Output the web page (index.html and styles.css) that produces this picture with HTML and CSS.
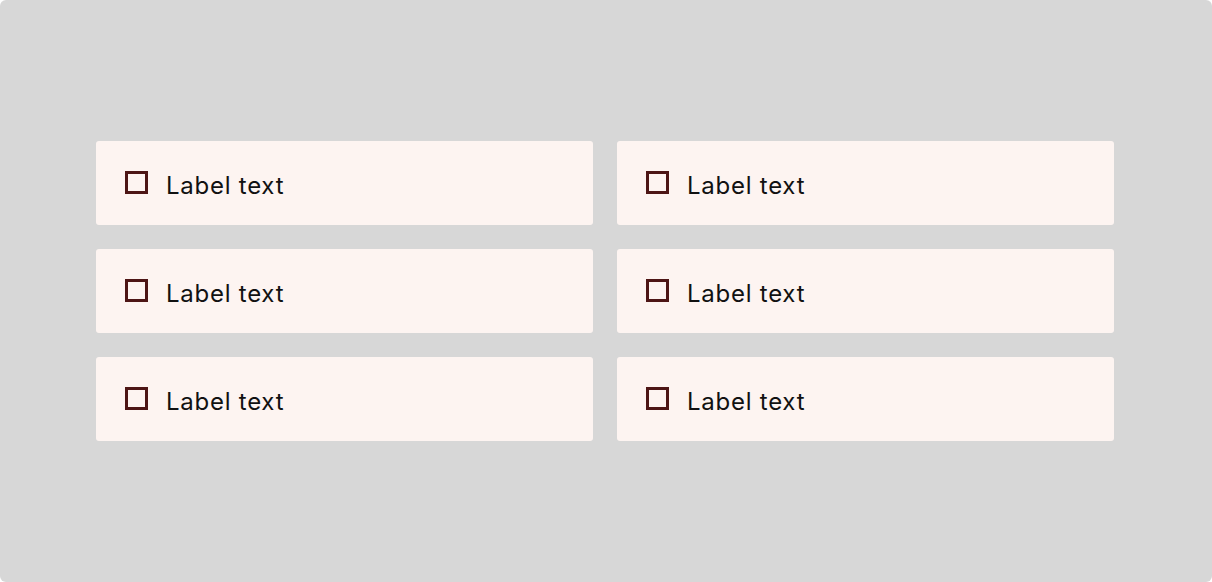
FILE: index.html
```html
<!DOCTYPE html>
<html>
<head>
<meta charset="utf-8">
<link rel="stylesheet" href="styles.css">
</head>
<body>
<div class="frame">
  <div class="grid">
    <label class="item"><span class="box"></span><span class="text">Label text</span></label>
    <label class="item"><span class="box"></span><span class="text">Label text</span></label>
    <label class="item"><span class="box"></span><span class="text">Label text</span></label>
    <label class="item"><span class="box"></span><span class="text">Label text</span></label>
    <label class="item"><span class="box"></span><span class="text">Label text</span></label>
    <label class="item"><span class="box"></span><span class="text">Label text</span></label>
  </div>
</div>
</body>
</html>
```
FILE: styles.css
```css
html, body {
  margin: 0;
  padding: 0;
  background: #ffffff;
}
.frame {
  width: 1212px;
  height: 582px;
  box-sizing: border-box;
  background: #d7d7d7;
  border-radius: 6px;
  padding-top: 141px;
  padding-left: 96px;
}
.grid {
  display: grid;
  grid-template-columns: 497px 497px;
  grid-auto-rows: 84px;
  gap: 24px;
}
.item {
  display: flex;
  align-items: center;
  background: #fdf4f1;
  border-radius: 3px;
  padding-left: 29px;
  font-family: Inter, "Noto Sans", sans-serif;
  font-size: 24px;
  color: #111111;
}
.box {
  width: 23px;
  height: 23px;
  box-sizing: border-box;
  border: 3px solid #4d1515;
  margin-right: 18px;
  margin-bottom: 1px;
}
.text {
  line-height: 1;
  padding-top: 6px;
  letter-spacing: 0.75px;
}
```
